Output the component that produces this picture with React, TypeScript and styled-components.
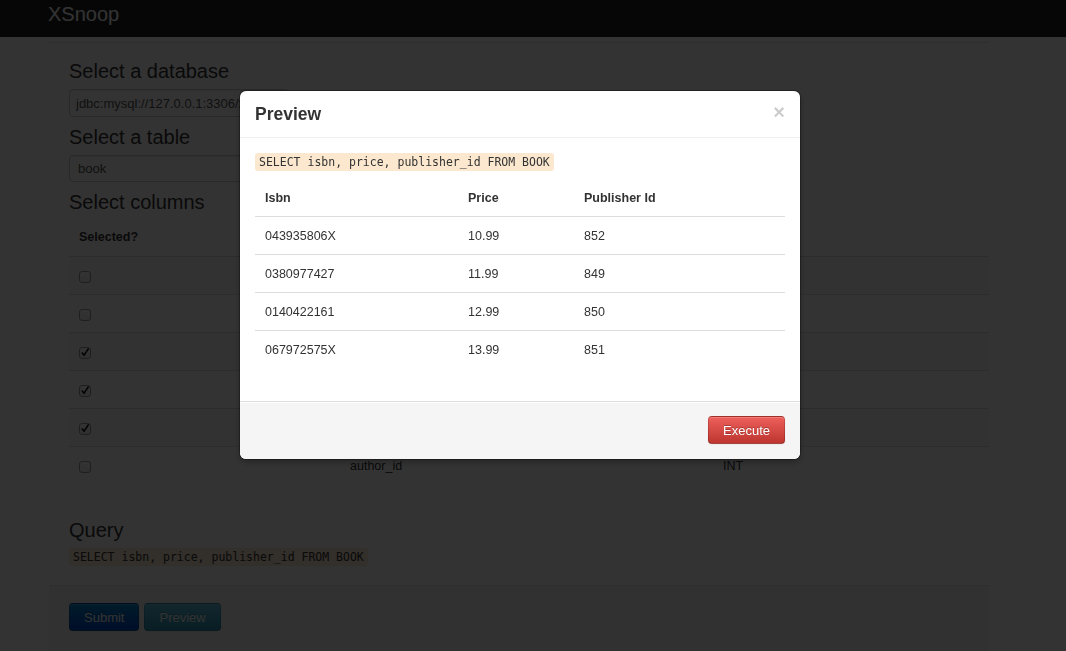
import React from 'react'
import styled, { createGlobalStyle, css } from 'styled-components'

const GlobalStyle = createGlobalStyle`
  html, body {
    margin: 0;
    background: #fff;
    overflow: hidden;
  }
  body {
    font-family: "Liberation Sans", Arial, Helvetica, sans-serif;
    font-size: 12.5px;
    color: #333;
  }
`

const Navbar = styled.div`
  height: 37px;
  background: #222;
`

const Brand = styled.a`
  display: block;
  margin-left: 48px;
  padding-top: 2px;
  font-size: 20px;
  line-height: 24px;
  font-weight: 200;
  color: #fff;
  text-decoration: none;
`

const Container = styled.div`
  width: 940px;
  margin: 5px 0 0 49px;
`

const Fieldset = styled.div`
  border-top: 1px solid #e5e5e5;
  padding: 16px 0 0 20px;
`

const Title = styled.h3<{ $gap?: number }>`
  margin: ${p => p.$gap ?? 0}px 0 0;
  font-size: 20px;
  line-height: 24px;
  font-weight: normal;
  color: #333;
`

const fieldBox = css`
  display: block;
  box-sizing: border-box;
  width: 220px;
  margin-top: 6px;
  padding: 0 6px;
  border: 1px solid #ccc;
  border-radius: 4px;
  background: #fff;
  font-family: inherit;
  font-size: 13px;
  color: #555;
  box-shadow: inset 0 1px 1px rgba(0, 0, 0, 0.075);
`

const TextInput = styled.input`
  ${fieldBox};
  height: 28px;
`

const Select = styled.select`
  ${fieldBox};
  height: 27px;
  padding-left: 8px;
  appearance: none;
`

const Table = styled.table<{ $width: string }>`
  width: ${p => p.$width};
  border-collapse: separate;
  border-spacing: 0;
  text-align: left;
`

const Th = styled.th<{ $h: number }>`
  height: ${p => p.$h}px;
  padding: 0 10px;
  font-weight: bold;
  vertical-align: middle;
`

const Td = styled.td`
  box-sizing: border-box;
  height: 38px;
  padding: 0 10px;
  border-top: 1px solid #ddd;
  vertical-align: middle;
`

const Row = styled.tr<{ $striped?: boolean }>`
  background: ${p => (p.$striped ? '#f9f9f9' : 'transparent')};
`

const PageTable = styled(Table)`
  margin-top: 4px;
`

const Box = styled.span<{ $checked: boolean }>`
  display: inline-flex;
  align-items: center;
  justify-content: center;
  box-sizing: border-box;
  width: 12px;
  height: 12px;
  margin-top: 2px;
  border: 1px solid #999;
  border-radius: 3px;
  background: linear-gradient(#fff, #eee);
  vertical-align: middle;
`

const QueryLine = styled.p`
  margin: 5px 0 18px;
  line-height: 20px;
`

const Code = styled.code`
  padding: 2px 4px;
  border-radius: 3px;
  background: #fce8cf;
  color: #333;
  font-family: "DejaVu Sans Mono", "Liberation Mono", monospace;
  font-size: 11.5px;
`

const FormActions = styled.div`
  display: flex;
  gap: 5px;
  padding: 17px 20px 20px;
  border-top: 1px solid #e5e5e5;
  background: #f5f5f5;
`

const variants = {
  primary: 'linear-gradient(#0088cc, #0044cc)',
  info: 'linear-gradient(#5bc0de, #2f96b4)',
  danger: 'linear-gradient(#ee5f5b, #bd362f)',
}

const Button = styled.button<{ $variant: keyof typeof variants }>`
  box-sizing: border-box;
  height: 28px;
  padding: 0 14px;
  border: 1px solid rgba(0, 0, 0, 0.15);
  border-bottom-color: rgba(0, 0, 0, 0.3);
  border-radius: 4px;
  background: ${p => variants[p.$variant]};
  color: #fff;
  font-family: inherit;
  font-size: 13px;
  text-shadow: 0 -1px 0 rgba(0, 0, 0, 0.25);
  box-shadow: inset 0 1px 0 rgba(255, 255, 255, 0.2), 0 1px 2px rgba(0, 0, 0, 0.05);
`

const Backdrop = styled.div`
  position: fixed;
  inset: 0;
  background: rgba(0, 0, 0, 0.8);
`

const Modal = styled.div`
  position: fixed;
  top: 91px;
  left: 240px;
  width: 560px;
  background: #fff;
  border-radius: 6px;
  overflow: hidden;
  box-shadow: 0 0 0 1px rgba(0, 0, 0, 0.3), 0 3px 7px rgba(0, 0, 0, 0.3);
`

const ModalHeader = styled.div`
  display: flex;
  align-items: center;
  justify-content: space-between;
  padding: 8px 15px;
  border-bottom: 1px solid #eee;
`

const ModalTitle = styled.h3`
  margin: 0;
  font-size: 17.5px;
  line-height: 30px;
  font-weight: bold;
`

const Close = styled.button`
  margin-top: -4px;
  padding: 0;
  border: 0;
  background: none;
  font-family: inherit;
  font-size: 20px;
  font-weight: bold;
  line-height: 20px;
  color: #000;
  opacity: 0.2;
  text-shadow: 0 1px 0 #fff;
`

const ModalBody = styled.div`
  padding: 15px;
`

const ModalSql = styled.p`
  margin: 0 0 8px;
  line-height: 18px;
`

const ModalTable = styled(Table)`
  margin-bottom: 18px;
`

const ModalFooter = styled.div`
  display: flex;
  justify-content: flex-end;
  padding: 14px 15px 15px;
  border-top: 1px solid #ddd;
  background: #f5f5f5;
  box-shadow: inset 0 1px 0 #fff;
`

const Checkbox = ({ checked }: { checked: boolean }) => (
  <Box $checked={checked}>
    {checked && (
      <svg width="11" height="11" viewBox="0 0 11 11">
        <path d="M2 5.5 L4.5 8.5 L9.5 1" fill="none" stroke="#111" strokeWidth="1.8" />
      </svg>
    )}
  </Box>
)

const query = 'SELECT isbn, price, publisher_id FROM BOOK'

const columns = [
  { name: 'id', type: 'INT', selected: false },
  { name: 'title', type: 'VARCHAR', selected: false },
  { name: 'isbn', type: 'VARCHAR', selected: true },
  { name: 'price', type: 'DECIMAL', selected: true },
  { name: 'publisher_id', type: 'INT', selected: true },
  { name: 'author_id', type: 'INT', selected: false },
]

const results = [
  ['043935806X', '10.99', '852'],
  ['0380977427', '11.99', '849'],
  ['0140422161', '12.99', '850'],
  ['067972575X', '13.99', '851'],
]

export default function App() {
  return (
    <>
      <GlobalStyle />
      <Navbar>
        <Brand href="#">XSnoop</Brand>
      </Navbar>
      <Container>
        <Fieldset>
          <Title>Select a database</Title>
          <TextInput readOnly value="jdbc:mysql://127.0.0.1:3306/xsnoop" />
          <Title $gap={8}>Select a table</Title>
          <Select value="book" onChange={() => {}}>
            <option value="book">book</option>
          </Select>
          <Title $gap={8}>Select columns</Title>
          <PageTable $width="920px">
            <colgroup>
              <col width={271} />
              <col width={373} />
              <col />
            </colgroup>
            <thead>
              <tr>
                <Th $h={38}>Selected?</Th>
                <Th $h={38}>Column</Th>
                <Th $h={38}>Type</Th>
              </tr>
            </thead>
            <tbody>
              {columns.map((c, i) => (
                <Row key={c.name} $striped={i % 2 === 0}>
                  <Td><Checkbox checked={c.selected} /></Td>
                  <Td>{c.name}</Td>
                  <Td>{c.type}</Td>
                </Row>
              ))}
            </tbody>
          </PageTable>
          <Title $gap={34}>Query</Title>
          <QueryLine><Code>{query}</Code></QueryLine>
        </Fieldset>
        <FormActions>
          <Button $variant="primary">Submit</Button>
          <Button $variant="info">Preview</Button>
        </FormActions>
      </Container>

      <Backdrop />
      <Modal>
        <ModalHeader>
          <ModalTitle>Preview</ModalTitle>
          <Close>×</Close>
        </ModalHeader>
        <ModalBody>
          <ModalSql><Code>{query}</Code></ModalSql>
          <ModalTable $width="100%">
            <colgroup>
              <col width={203} />
              <col width={116} />
              <col />
            </colgroup>
            <thead>
              <tr>
                <Th $h={37}>Isbn</Th>
                <Th $h={37}>Price</Th>
                <Th $h={37}>Publisher Id</Th>
              </tr>
            </thead>
            <tbody>
              {results.map(r => (
                <tr key={r[0]}>
                  {r.map(v => <Td key={v}>{v}</Td>)}
                </tr>
              ))}
            </tbody>
          </ModalTable>
        </ModalBody>
        <ModalFooter>
          <Button $variant="danger">Execute</Button>
        </ModalFooter>
      </Modal>
    </>
  )
}
